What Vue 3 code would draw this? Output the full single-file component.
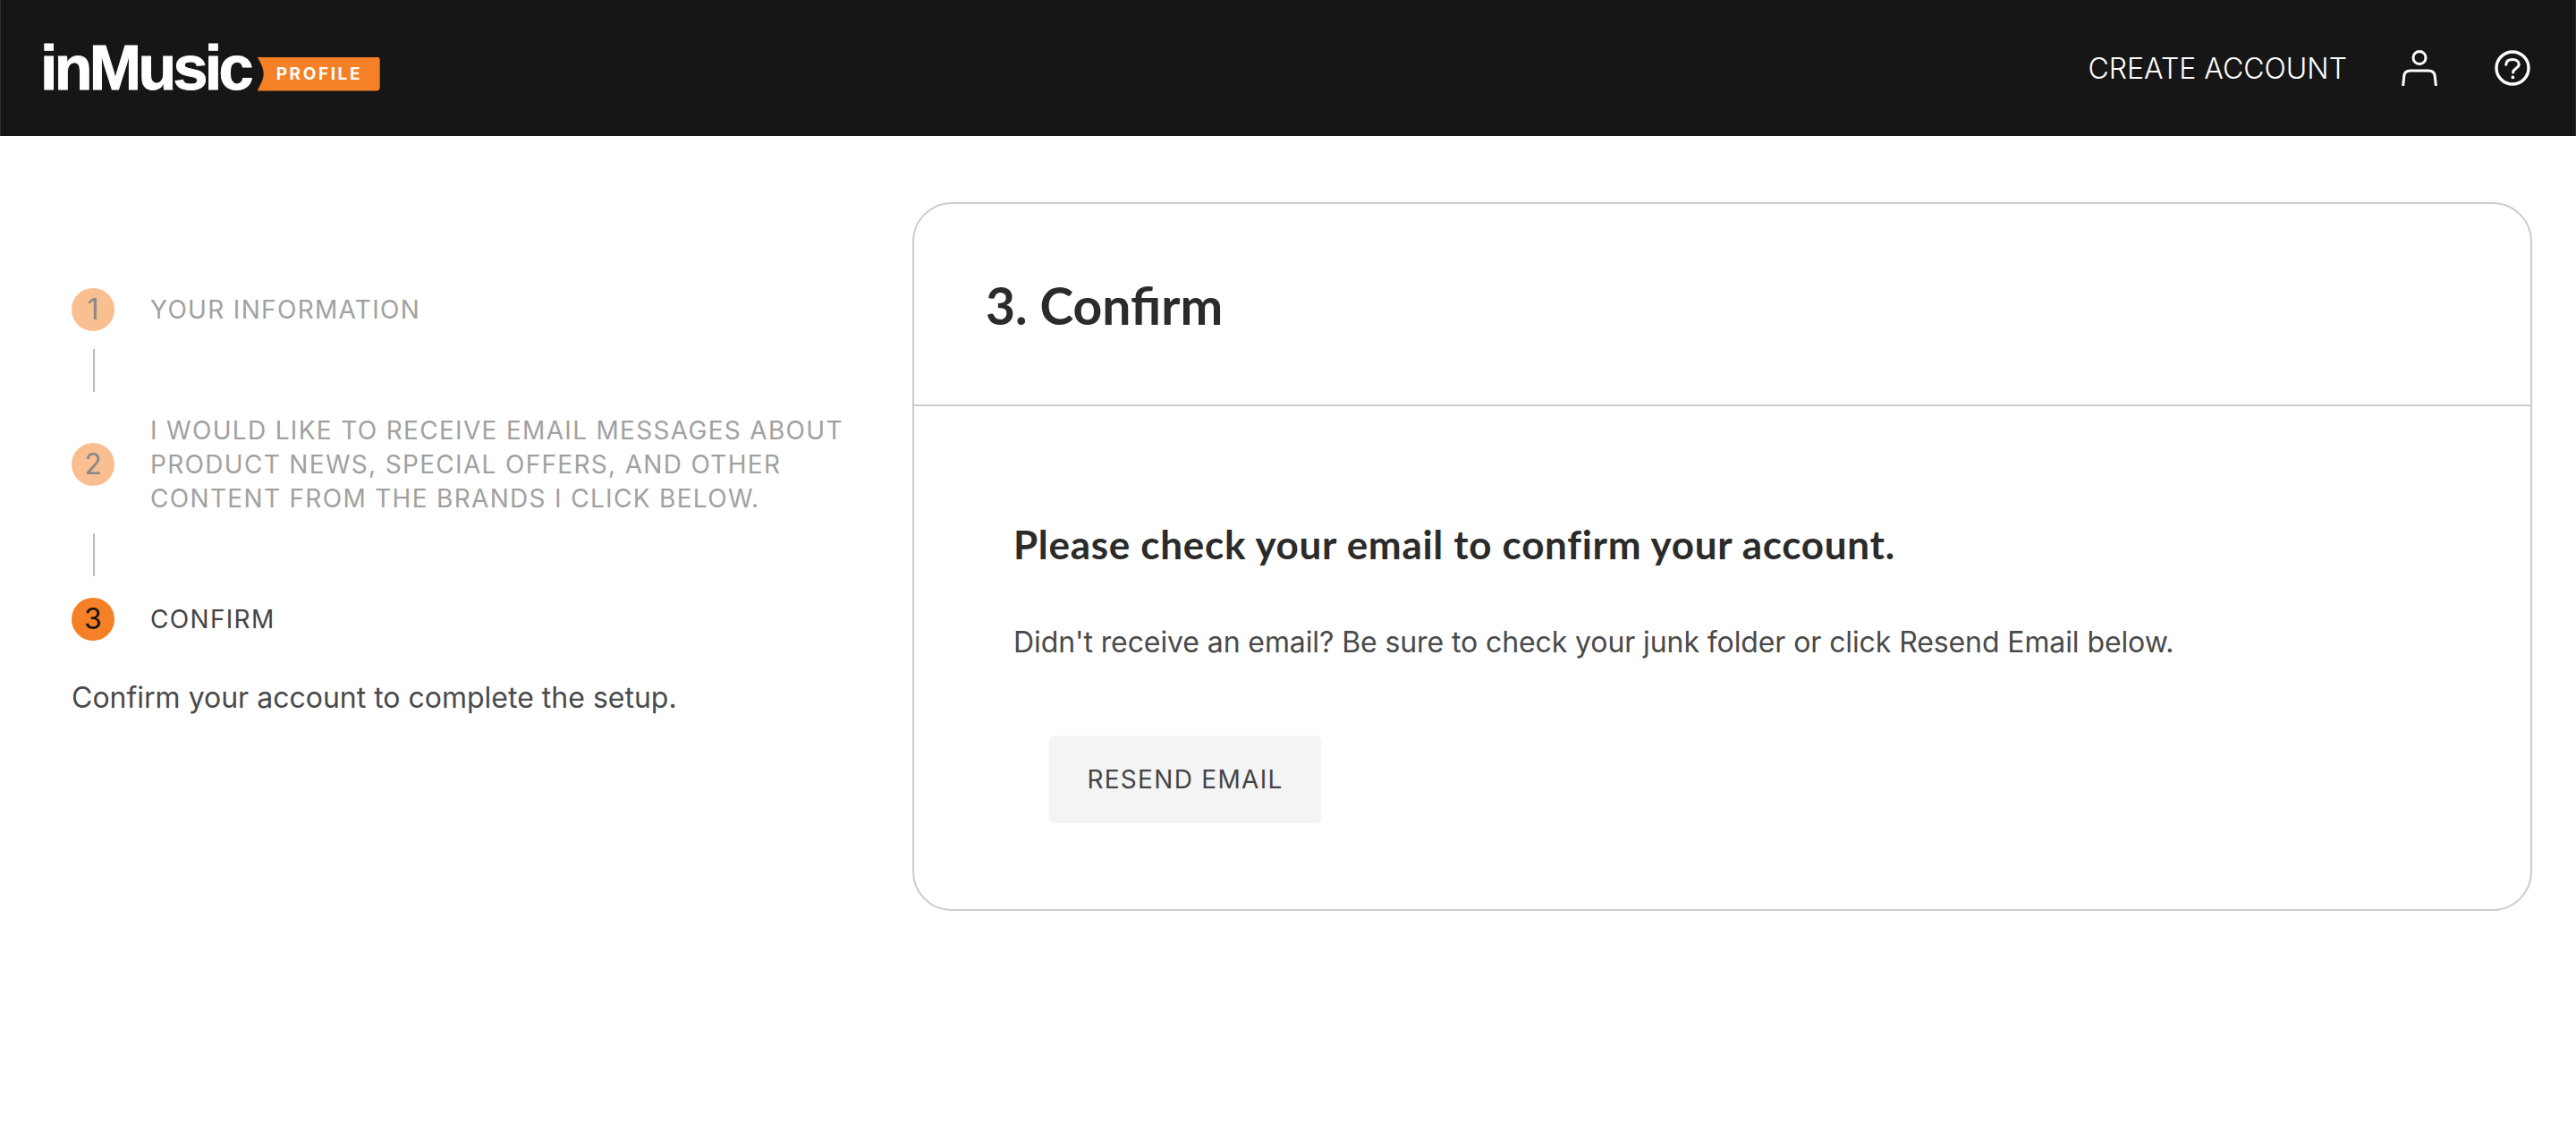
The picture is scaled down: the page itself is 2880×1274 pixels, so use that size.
<template>
  <div class="page">
    <header class="topbar">
      <a class="logo">
        <span class="logo-word">inMusic</span>
        <span class="logo-tag">PROFILE</span>
      </a>
      <nav class="nav">
        <span class="nav-link">CREATE ACCOUNT</span>
        <svg class="icon-user" viewBox="0 0 40 40" fill="none" stroke="#fff" stroke-width="3">
          <circle cx="20" cy="8.5" r="7" />
          <path d="M1.6 40 L2.8 29 C3.2 24.5 6.4 23 10 23 H30 C33.6 23 36.8 24.5 37.2 29 L38.4 40" />
        </svg>
        <svg class="icon-help" viewBox="0 0 40 40" fill="none" stroke="#fff" stroke-width="3.4" stroke-linecap="round">
          <circle cx="20" cy="20" r="18" />
          <path d="M12.8 16.2 C13 12 16.4 10.4 20 10.4 C24 10.4 27.2 12.6 27.2 16 C27.2 20.4 20.6 20.6 20.6 25" stroke-width="3" />
          <circle cx="20.4" cy="30.4" r="1.2" fill="#fff" stroke-width="1.4" />
        </svg>
      </nav>
    </header>

    <main class="content">
      <aside class="steps">
        <template v-for="(step, i) in steps" :key="step.num">
          <div class="step" :class="{ 'step--done': !step.active }">
            <span class="step-num">{{ step.num }}</span>
            <span class="step-label">{{ step.label }}</span>
          </div>
          <div v-if="i < steps.length - 1" class="step-line"></div>
        </template>
        <p class="step-note">Confirm your account to complete the setup.</p>
      </aside>

      <section class="card">
        <div class="card-head">
          <h1>3. Confirm</h1>
        </div>
        <div class="card-body">
          <h2>Please check your email to confirm your account.</h2>
          <p>Didn't receive an email? Be sure to check your junk folder or click Resend Email below.</p>
          <button class="resend" type="button">RESEND EMAIL</button>
        </div>
      </section>
    </main>
  </div>
</template>

<script setup>
const steps = [
  { num: 1, label: 'YOUR INFORMATION', active: false },
  {
    num: 2,
    label: 'I WOULD LIKE TO RECEIVE EMAIL MESSAGES ABOUT PRODUCT NEWS, SPECIAL OFFERS, AND OTHER CONTENT FROM THE BRANDS I CLICK BELOW.',
    active: false,
  },
  { num: 3, label: 'CONFIRM', active: true },
];
</script>

<style>
html, body {
  margin: 0;
  background: #fff;
}
</style>

<style scoped>
.page {
  min-height: 1274px;
  font-family: Inter, "Liberation Sans", sans-serif;
  color: #4a4a4a;
}

.topbar {
  height: 152px;
  box-sizing: border-box;
  padding: 0 50px 0 44px;
  display: flex;
  align-items: center;
  justify-content: space-between;
  background: #161616;
  border-left: 1px solid #2e2e2e;
  border-right: 1px solid #2e2e2e;
}

.logo {
  display: flex;
  align-items: flex-end;
  gap: 8px;
  height: 51px;
}
.logo-word {
  font-family: "Liberation Sans", Arial, sans-serif;
  font-weight: 700;
  font-size: 70px;
  line-height: 51px;
  letter-spacing: -3.7px;
  color: #fff;
  height: 51px;
  -webkit-text-stroke: 1px #fff;
}
.logo-tag {
  box-sizing: border-box;
  width: 137px;
  height: 38px;
  padding-left: 21px;
  background: #f58025;
  clip-path: path("M0 0H133a4 4 0 0 1 4 4V34a4 4 0 0 1-4 4H0C5 28 7 24 7 19C7 14 5 9 0 0Z");
  font-family: Inter, "Liberation Sans", sans-serif;
  font-weight: 700;
  font-size: 19px;
  line-height: 38px;
  letter-spacing: 2.6px;
  color: #fff;
}

.nav {
  display: flex;
  align-items: center;
}
.nav-link {
  font-size: 32px;
  font-weight: 300;
  color: #fff;
  margin-right: 61px;
}
.icon-user {
  width: 40px;
  height: 40px;
  margin-right: 64px;
}
.icon-help {
  width: 40px;
  height: 40px;
}

.content {
  display: grid;
  grid-template-columns: 1020px 1811px;
  padding-top: 74px;
}

.steps {
  box-sizing: border-box;
  padding: 96px 50px 0 80px;
}
.step {
  display: flex;
  align-items: center;
  gap: 40px;
}
.step--done {
  opacity: 0.5;
}
.step-num {
  flex-shrink: 0;
  width: 48px;
  height: 48px;
  border-radius: 50%;
  background: #f58025;
  color: #111;
  font-size: 32px;
  line-height: 48px;
  text-align: center;
}
.step-label {
  font-size: 28px;
  line-height: 38px;
  letter-spacing: 1.32px;
  color: #444;
}
.step-line {
  width: 2px;
  height: 48px;
  margin: 20px 0 24px 24px;
  background: #bbb;
}
.step-note {
  margin: 40px 0 0;
  font-size: 32px;
  line-height: 48px;
  color: #4a4a4a;
}

.card {
  box-sizing: border-box;
  height: 792px;
  border: 2px solid #ccc;
  border-radius: 44px;
}
.card-head {
  height: 222px;
  box-sizing: content-box;
  display: flex;
  align-items: center;
  padding: 2px 0 0 80px;
  border-bottom: 2px solid #ccc;
}
.card-head h1 {
  margin: 0;
  font-family: Lato, "Open Sans", sans-serif;
  font-size: 57px;
  font-weight: 700;
  color: #2b2b2b;
}
.card-body {
  padding: 129px 0 0 111px;
}
.card-body h2 {
  margin: 0;
  font-family: Lato, "Open Sans", sans-serif;
  font-size: 44px;
  line-height: 50px;
  letter-spacing: 0.7px;
  font-weight: 700;
  color: #2b2b2b;
}
.card-body p {
  margin: 61px 0 80px;
  font-size: 32px;
  line-height: 48px;
  letter-spacing: -0.1px;
  color: #4a4a4a;
}
.resend {
  display: block;
  margin-left: 40px;
  width: 304px;
  height: 98px;
  border: none;
  border-radius: 6px;
  background: #f4f4f4;
  font-family: Inter, "Liberation Sans", sans-serif;
  font-size: 28px;
  letter-spacing: 1.3px;
  color: #444;
}
</style>
